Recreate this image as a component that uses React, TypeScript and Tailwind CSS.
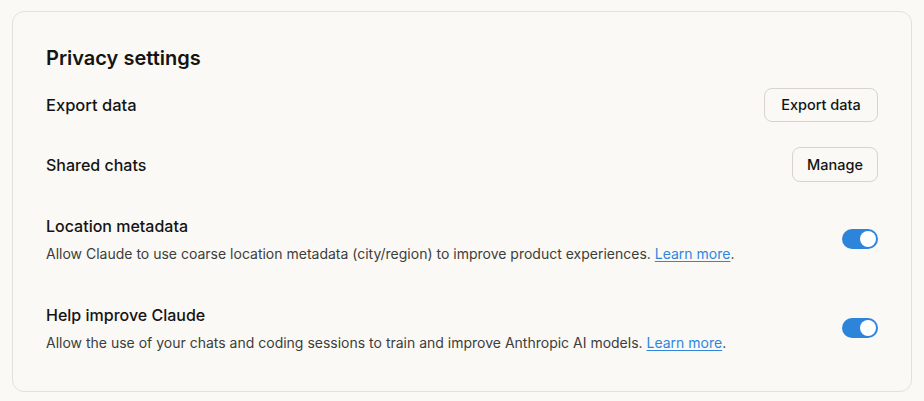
function Toggle() {
  return (
    <button
      type="button"
      className="relative h-5 w-9 shrink-0 rounded-full bg-[#2c84db]"
      aria-checked="true"
      role="switch"
    >
      <span className="absolute right-[2px] top-[2px] h-4 w-4 rounded-full bg-white" />
    </button>
  );
}

function ToggleRow({ title, desc, className }: { title: string; desc: string; className?: string }) {
  return (
    <div className={"flex items-center justify-between " + (className ?? "")}>
      <div>
        <div className="text-[16px] font-medium leading-6 text-[#141413]">{title}</div>
        <p className="mt-[6px] text-[14px] leading-5 text-[#3d3d3a]">
          {desc}{" "}
          <a href="#" className="text-[#2f87dd] underline underline-offset-2">
            Learn more
          </a>
          .
        </p>
      </div>
      <Toggle />
    </div>
  );
}

export default function App() {
  return (
    <div className="min-h-screen bg-[#faf9f5] px-3 pt-[11px] font-['Inter',sans-serif]">
      <div className="rounded-xl border border-[#e3e1db] bg-[#faf9f6] px-[33px] pb-[38px] pt-[32px]">
        <h2 className="text-[20px] font-semibold leading-7 text-[#141413]">Privacy settings</h2>

        <div className="mt-4 flex items-center justify-between">
          <span className="text-[16.5px] font-medium text-[#141413]">Export data</span>
          <button
            type="button"
            className="h-[34px] w-[114px] rounded-lg border border-[#d6d4cc] bg-[#faf9f6] text-[14.5px] font-medium text-[#141413]"
          >
            Export data
          </button>
        </div>

        <div className="mt-[25px] flex items-center justify-between">
          <span className="text-[16px] font-medium text-[#141413]">Shared chats</span>
          <button
            type="button"
            className="h-[35px] w-[86px] rounded-lg border border-[#d6d4cc] bg-[#faf9f6] text-[14.5px] font-medium text-[#141413]"
          >
            Manage
          </button>
        </div>

        <ToggleRow
          className="mt-8"
          title="Location metadata"
          desc="Allow Claude to use coarse location metadata (city/region) to improve product experiences."
        />
        <ToggleRow
          className="mt-[39px]"
          title="Help improve Claude"
          desc="Allow the use of your chats and coding sessions to train and improve Anthropic AI models."
        />
      </div>
    </div>
  );
}
